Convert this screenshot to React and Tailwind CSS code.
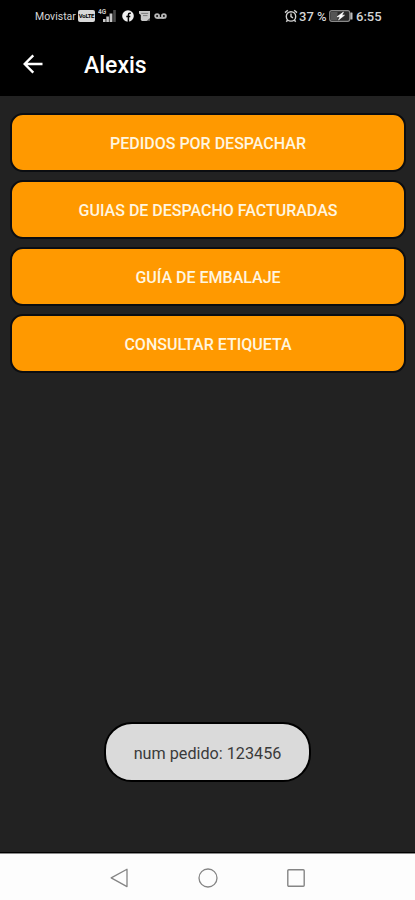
const menuOptions = [
  { id: 'pedidos', label: 'PEDIDOS POR DESPACHAR' },
  { id: 'guias', label: 'GUIAS DE DESPACHO FACTURADAS' },
  { id: 'embalaje', label: 'GUÍA DE EMBALAJE' },
  { id: 'etiqueta', label: 'CONSULTAR ETIQUETA' }
];

const SignalIcon = () => (
  <svg className="w-5 h-4" viewBox="0 0 20 16" fill="#c8c8c8">
    <text x="0" y="6" fontSize="6.5" fontWeight="700" fontFamily="Roboto, sans-serif">4G</text>
    <rect x="5" y="11" width="2.6" height="3" />
    <rect x="8.3" y="8.5" width="2.6" height="5.5" />
    <rect x="11.6" y="5.5" width="2.8" height="8.5" />
    <rect x="15.2" y="2" width="2.6" height="12" fill="#4a4a4a" />
  </svg>
);

const FacebookIcon = () => (
  <svg className="w-3 h-3" viewBox="0 0 12 12">
    <circle cx="6" cy="6" r="5.8" fill="#f0f0f0" />
    <path d="M8.8 3.2H7.9C6.9 3.2 6.4 3.8 6.4 4.7V12M4.3 6.6h4" stroke="#000" strokeWidth="1.5" fill="none" />
  </svg>
);

const NewsIcon = () => (
  <svg className="w-[11px] h-3" viewBox="0 0 11 12">
    <path d="M0 1h11v10H3L1.8 10V5L0 3.5z" fill="#c8c8c8" />
    <path d="M2.2 3.4h7M4 5.6h4.5" stroke="#666" strokeWidth="0.8" />
    <path d="M7.5 11L11 8v3z" fill="#555" />
  </svg>
);

const VoicemailIcon = () => (
  <svg className="w-[13px] h-2" viewBox="0 0 13 8" fill="none" stroke="#b5b5b5" strokeWidth="1.9">
    <circle cx="3.1" cy="4" r="1.9" />
    <circle cx="9.9" cy="4" r="1.9" />
    <path d="M3.1 5.9h6.8" />
  </svg>
);

const AlarmIcon = () => (
  <svg className="w-3.5 h-3.5" viewBox="0 0 14 14" fill="none" stroke="#d0d0d0" strokeWidth="1.4">
    <circle cx="7" cy="7.4" r="4.7" />
    <path d="M7 4.6v3l2 1.2M1 3.6L3.8 1.2M13 3.6L10.2 1.2M3.7 11l-1.4 1.8M10.3 11l1.4 1.8" />
  </svg>
);

const BatteryIcon = () => (
  <svg className="w-6 h-3" viewBox="0 0 24 12">
    <rect x="0.7" y="0.7" width="20" height="10.6" rx="2" fill="#2a2a2a" stroke="#888" strokeWidth="1.2" />
    <rect x="2" y="2" width="6.5" height="8" fill="#555" />
    <path d="M14.5 2L8 6.8h3L9.5 10l6-4.8h-2.6z" fill="#fff" stroke="#fff" strokeWidth="0.6" />
    <rect x="21.3" y="2.5" width="2.2" height="7" rx="0.6" fill="#bbb" />
  </svg>
);

const StatusBar = () => (
  <div className="h-8 pl-[35px] pr-[33px] flex items-center justify-between text-[#d6d6d6]">
    <div className="flex items-center">
      <span className="w-[43px] pt-0.5 text-[10.5px] leading-none">Movistar</span>
      <span className="w-[17px] h-3 mr-[3px] rounded-[2px] bg-[#d8d8d8] flex items-center justify-center text-[6px] leading-none font-bold tracking-tighter text-black">
        VoLTE
      </span>
      <SignalIcon />
      <div className="ml-1 flex items-center">
        <FacebookIcon />
        <div className="ml-[5px] mr-1 flex"><NewsIcon /></div>
        <VoicemailIcon />
      </div>
    </div>
    <div className="flex items-center">
      <AlarmIcon />
      <span className="w-[30px] ml-px pt-px text-[13px] leading-none font-medium whitespace-nowrap">37 %</span>
      <BatteryIcon />
      <span className="w-[26px] ml-[3px] pt-px text-[13px] leading-none font-medium whitespace-nowrap">6:55</span>
    </div>
  </div>
);

const Header = ({ title }) => (
  <div className="h-16 pl-[23px] flex items-center text-white">
    <button type="button" className="flex" aria-label="Volver">
      <svg className="w-5 h-5" viewBox="0 0 20 20" fill="none" stroke="currentColor" strokeWidth={2.4}>
        <path d="M19.5 10H2M10.3 1.3L1.7 10l8.6 8.7" />
      </svg>
    </button>
    <h1 className="ml-[41px] pt-0.5 text-[23px] leading-none font-medium">{title}</h1>
  </div>
);

const MenuButton = ({ label }) => (
  <button
    type="button"
    className="h-[59px] w-full pt-[3px] rounded-[13px] border-2 border-[#0b0d11] bg-[#ff9900] flex items-center justify-center text-[16px] leading-none font-medium text-[#fff6e0] whitespace-nowrap"
  >
    {label}
  </button>
);

const NavigationBar = () => (
  <div className="h-[47px] pt-0.5 pl-px border-t border-[#8a8a8a] bg-[#fdfdfd] flex items-center justify-center gap-[68px]">
    <svg className="w-5 h-5" viewBox="0 0 20 20" fill="none" stroke="#858585" strokeWidth="1.3">
      <path d="M17 1.2v17.4L1.2 9.9z" strokeLinejoin="round" />
    </svg>
    <svg className="w-5 h-5" viewBox="0 0 20 20" fill="none" stroke="#858585" strokeWidth="1.3">
      <circle cx="10" cy="10" r="9" />
    </svg>
    <svg className="w-5 h-5" viewBox="0 0 20 20" fill="none" stroke="#858585" strokeWidth="1.4">
      <rect x="1.8" y="1.8" width="16.4" height="16.4" rx="1" />
    </svg>
  </div>
);

const App = () => {
  return (
    <div className="w-full h-screen flex flex-col overflow-hidden bg-[#222222] font-['Roboto',sans-serif]">
      <div className="bg-black">
        <StatusBar />
        <Header title="Alexis" />
      </div>

      <main className="flex-1 flex flex-col justify-between">
        <div className="pt-[17px] pl-[10px] pr-[9px] flex flex-col gap-2">
          {menuOptions.map((option) => (
            <MenuButton key={option.id} label={option.label} />
          ))}
        </div>

        {/* Toast */}
        <div className="mb-[70px] self-center w-[207px] h-[60px] pt-1 rounded-[28px] border-2 border-black bg-[#dadada] flex items-center justify-center text-[16.2px] leading-none text-[#3a3a3a] whitespace-nowrap">
          num pedido: 123456
        </div>
      </main>

      <div className="h-px bg-black" />
      <NavigationBar />
    </div>
  );
};

export default App;
